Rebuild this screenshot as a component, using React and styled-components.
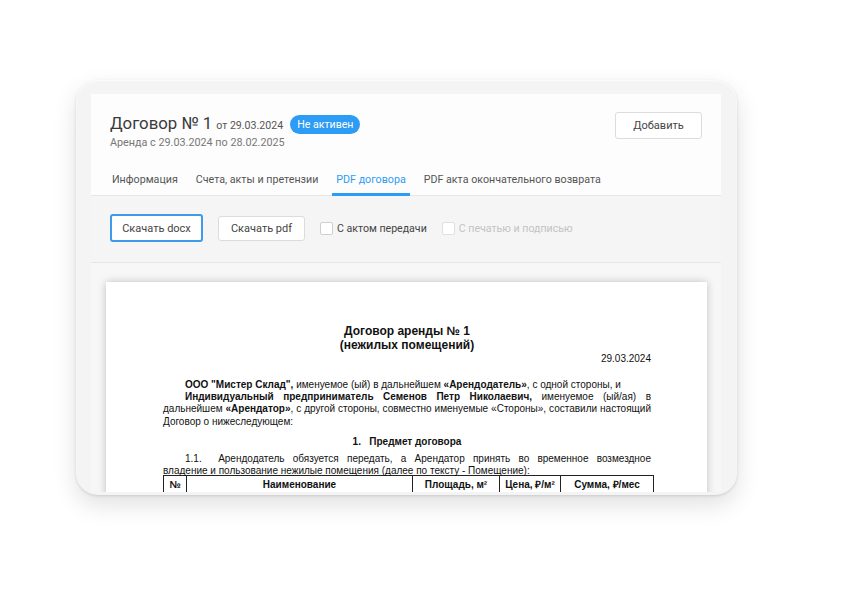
import styled, { createGlobalStyle } from "styled-components";

const GlobalStyle = createGlobalStyle`
  html, body {
    margin: 0;
    padding: 0;
    background: #ffffff;
  }
  body {
    font-family: Roboto, "Noto Sans", Arial, sans-serif;
  }
`;

const Stage = styled.div`
  width: 850px;
  height: 603px;
  padding: 80px 0 0 76px;
  box-sizing: border-box;
  overflow: hidden;
`;

const Device = styled.div`
  width: 661px;
  height: 415px;
  box-sizing: border-box;
  padding: 14px 16px 3px 15px;
  border-radius: 22px;
  background: #f4f4f4;
  box-shadow: 0 10px 24px rgba(0, 0, 0, 0.12), 0 1px 3px rgba(0, 0, 0, 0.12),
    inset 0 1px 2px rgba(255, 255, 255, 0.9);
  display: flex;
`;

const Screen = styled.div`
  flex: 1;
  background: #f8f8f8;
  overflow: hidden;
  display: flex;
  flex-direction: column;
`;

const Header = styled.div`
  background: #fdfdfd;
  border-bottom: 1px solid #e6e6e6;
  padding: 0 19px;
`;

const HeaderTop = styled.div`
  display: flex;
  justify-content: space-between;
  align-items: flex-start;
  padding-top: 18px;
`;

const TitleRow = styled.div`
  display: flex;
  align-items: center;
  gap: 7px;
  height: 22px;
  margin-top: 1px;
`;

const Title = styled.h1`
  margin: 0;
  font-size: 16.8px;
  font-weight: 400;
  color: #3a3a3a;
  line-height: 22px;
  small {
    font-size: 10.6px;
    color: #555;
    margin-left: 4px;
  }
`;

const Badge = styled.span`
  display: inline-block;
  background: #2d9cf4;
  color: #fff;
  font-size: 10.6px;
  line-height: 19px;
  padding: 0 7px;
  border-radius: 10px;
`;

const Subtitle = styled.div`
  font-size: 10.8px;
  line-height: 14px;
  color: #777;
  margin-top: 1px;
`;

const Button = styled.button`
  font-family: Roboto, Arial, sans-serif;
  font-size: 11px;
  color: #444;
  background: #fff;
  border: ${(p) => (p.focused ? "2px solid #3d9bea" : "1px solid #dcdcdc")};
  border-radius: 3px;
  width: ${(p) => p.w}px;
  height: ${(p) => p.h}px;
  padding: 0;
  cursor: pointer;
`;

const Tabs = styled.div`
  display: flex;
  margin-top: 23px;
  margin-left: -2px;
  gap: 10px;
`;

const Tab = styled.div`
  font-size: 10.7px;
  line-height: 14px;
  color: ${(p) => (p.active ? "#2d9cf4" : "#555")};
  padding: 0 4px 6px;
  border-bottom: 3px solid ${(p) => (p.active ? "#2d9cf4" : "transparent")};
  margin-bottom: -1px;
`;

const Toolbar = styled.div`
  display: flex;
  align-items: center;
  gap: 15px;
  padding: 18px 19px 20px;
  background: #f5f5f5;
  border-bottom: 1px solid #e6e6e6;
`;

const Check = styled.label`
  display: flex;
  align-items: center;
  gap: 4px;
  font-size: 10.6px;
  color: ${(p) => (p.disabled ? "#c3c3c3" : "#444")};
`;

const Box = styled.span`
  width: 11px;
  height: 11px;
  border: 1px solid ${(p) => (p.disabled ? "#e0e0e0" : "#cfcfcf")};
  border-radius: 2px;
  background: #fff;
`;

const Viewer = styled.div`
  flex: 1;
  background: #f7f7f7;
  padding: 19px 14px 0 15px;
  overflow: hidden;
`;

const Page = styled.div`
  background: #fff;
  box-shadow: 0 0 8px rgba(0, 0, 0, 0.22);
  padding: 42px 56px 40px 57px;
  font-family: "Liberation Sans", Arial, sans-serif;
  font-size: 10px;
  color: #111;
  line-height: 12.2px;
`;

const DocTitle = styled.div`
  text-align: center;
  font-weight: bold;
  font-size: 12px;
  line-height: 14px;
`;

const DocDate = styled.div`
  text-align: right;
  line-height: 12px;
  margin-top: 1px;
`;

const Para = styled.div`
  margin-top: ${(p) => p.mt || 0}px;
`;

const Line = styled.div`
  white-space: nowrap;
  text-align: ${(p) => (p.last ? "left" : "justify")};
  text-align-last: ${(p) => (p.last ? "left" : "justify")};
  padding-left: ${(p) => (p.indent ? 22 : 0)}px;
`;

const Section = styled.div`
  text-align: center;
  font-weight: bold;
  line-height: 12px;
  margin: 8px 0 5px;
`;

const Table = styled.table`
  width: 490px;
  table-layout: fixed;
  border-collapse: collapse;
  margin-top: -2px;
  th {
    border: 1px solid #222;
    font-weight: bold;
    padding: 3px 2px;
    line-height: 12px;
    text-align: center;
  }
`;

const columns = [
  { title: "№", width: 23 },
  { title: "Наименование", width: 226 },
  { title: "Площадь, м²", width: 87 },
  { title: "Цена, ₽/м²", width: 61 },
  { title: "Сумма, ₽/мес", width: 93 },
];

export default function App() {
  return (
    <Stage>
      <GlobalStyle />
      <Device>
        <Screen>
          <Header>
            <HeaderTop>
              <div>
                <TitleRow>
                  <Title>
                    Договор № 1<small>от 29.03.2024</small>
                  </Title>
                  <Badge>Не активен</Badge>
                </TitleRow>
                <Subtitle>Аренда с 29.03.2024 по 28.02.2025</Subtitle>
              </div>
              <Button w={87} h={27}>
                Добавить
              </Button>
            </HeaderTop>
            <Tabs>
              <Tab>Информация</Tab>
              <Tab>Счета, акты и претензии</Tab>
              <Tab active>PDF договора</Tab>
              <Tab>PDF акта окончательного возврата</Tab>
            </Tabs>
          </Header>
          <Toolbar>
            <Button focused w={93} h={28}>
              Скачать docx
            </Button>
            <Button w={87} h={25}>
              Скачать pdf
            </Button>
            <Check>
              <Box />С актом передачи
            </Check>
            <Check disabled>
              <Box disabled />С печатью и подписью
            </Check>
          </Toolbar>
          <Viewer>
            <Page>
              <DocTitle>
                Договор аренды № 1
                <br />
                (нежилых помещений)
              </DocTitle>
              <DocDate>29.03.2024</DocDate>
              <Para mt={14}>
                <Line indent last>
                  <b>ООО "Мистер Склад",</b> именуемое (ый) в дальнейшем{" "}
                  <b>«Арендодатель»</b>, с одной стороны, и
                </Line>
                <Line indent>
                  <b>Индивидуальный предприниматель Семенов Петр Николаевич,</b>{" "}
                  именуемое (ый/ая) в
                </Line>
                <Line>
                  дальнейшем <b>«Арендатор»</b>, с другой стороны, совместно
                  именуемые «Стороны», составили настоящий
                </Line>
                <Line last>Договор о нижеследующем:</Line>
              </Para>
              <Section>1.&nbsp;&nbsp;&nbsp;Предмет договора</Section>
              <Para>
                <Line indent>
                  1.1.&nbsp; Арендодатель обязуется передать, а Арендатор
                  принять во временное возмездное
                </Line>
                <Line last>
                  владение и пользование нежилые помещения (далее по тексту -
                  Помещение):
                </Line>
              </Para>
              <Table>
                <colgroup>
                  {columns.map((c) => (
                    <col key={c.title} style={{ width: c.width }} />
                  ))}
                </colgroup>
                <thead>
                  <tr>
                    {columns.map((c) => (
                      <th key={c.title}>{c.title}</th>
                    ))}
                  </tr>
                </thead>
              </Table>
            </Page>
          </Viewer>
        </Screen>
      </Device>
    </Stage>
  );
}
